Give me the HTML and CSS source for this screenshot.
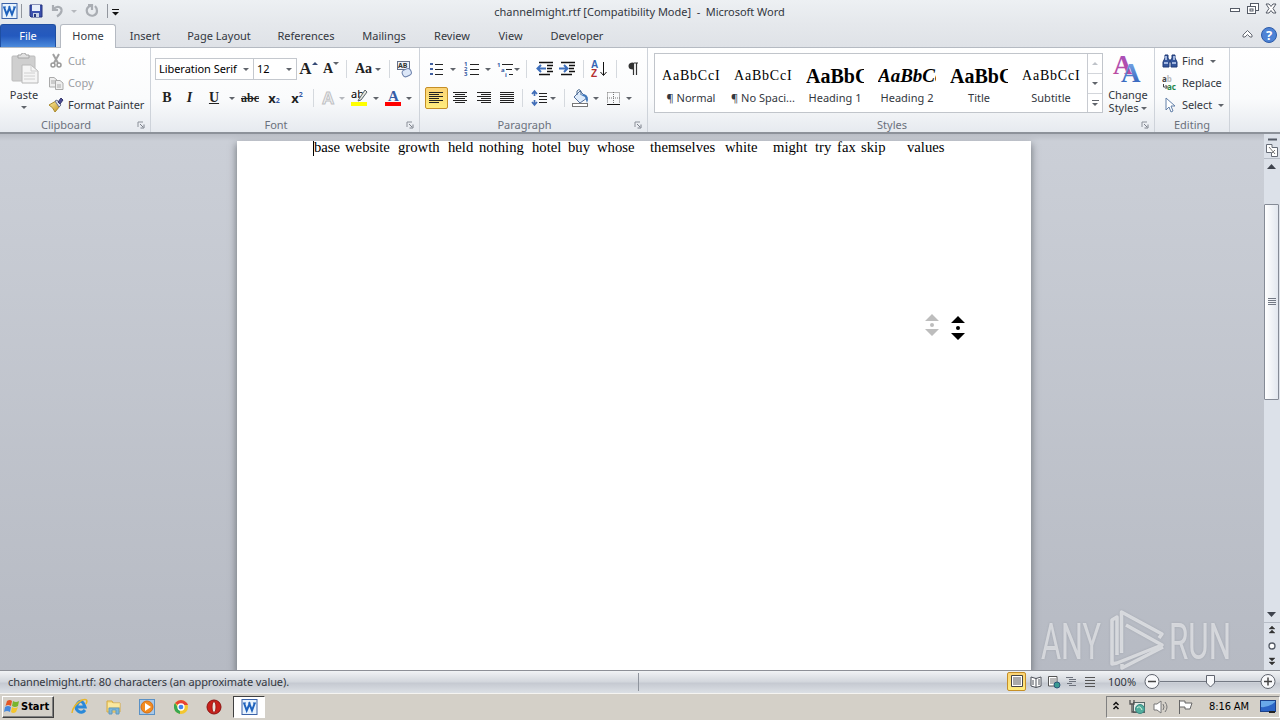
FILE: index.html
```html
<!DOCTYPE html>
<html lang="en">
  <head>
    <meta charset="UTF-8" />
    <meta name="viewport" content="width=device-width, initial-scale=1.0" />
    <title>channelmight.rtf - Microsoft Word</title>
    <link rel="stylesheet" href="styles.css">
  </head>
  <body>
    <svg class="defs" width="0" height="0">
      <defs>
        <linearGradient id="blue" x1="0" y1="0" x2="0" y2="1"><stop offset="0" stop-color="#82b1ed"/><stop offset="1" stop-color="#2858b5"/></linearGradient>
        <linearGradient id="purple" x1="0" y1="0" x2="0" y2="1"><stop offset="0" stop-color="#a451c0"/><stop offset="1" stop-color="#c04a9a"/></linearGradient>
        <linearGradient id="gold" x1="0" y1="0" x2="1" y2="1"><stop offset="0" stop-color="#fff0a0"/><stop offset="1" stop-color="#c09020"/></linearGradient>
        <symbol id="word" viewBox="0 0 18 18">
          <rect x="2" y="1.500" width="15" height="15" fill="#e8f3fd" stroke="#3a62a8"/>
          <path d="M4 5L6.700 12.500L9.500 6L12 12.500L14.800 5" fill="none" stroke="#1e62bd" stroke-width="2"/>
          <path d="M3 5H6M8 5H10.500M13 5H16" stroke="#1e62bd"/>
        </symbol>
        <symbol id="launcher" viewBox="0 0 8 8"><path d="M1 6V1H6" fill="none" stroke="#8b9099"/><path d="M3 3L6 6M7 3.500V7H3.500" fill="none" stroke="#7b808a"/></symbol>
      </defs>
    </svg>

    <header class="title-bar">
      <div class="quick-access">
        <svg width="18" height="18"><use href="#word"/></svg>
        <i class="sep"></i>
        <svg class="save" width="16" height="16" viewBox="0 0 16 16"><path d="M2 2H14V14H3L2 13Z" fill="#3c50ad" stroke="#27357f"/><path d="M4 2H12V8H4Z" fill="#e9effa"/><path d="M5 10H11V14H5Z" fill="#c9d2e6"/><path d="M6 11H8V14H6Z" fill="#28377f"/></svg>
        <svg class="undo" width="14" height="14" viewBox="0 0 14 14"><path d="M2 1V6H7M2.500 5.500C6 1 11 3 10.500 7Q10 10 6 12.500" fill="none" stroke="#a9adb3" stroke-width="2.200"/></svg>
        <i class="arrow pale"></i>
        <svg class="redo" width="14" height="14" viewBox="0 0 14 14"><path d="M3 1H7V6M7 2C3 1 0 6 3 10C6 13 12 12 12 7Q12 4 10 2" fill="none" stroke="#a9adb3" stroke-width="2.200"/></svg>
        <i class="sep"></i>
        <svg class="customize" width="9" height="8" viewBox="0 0 9 8"><path d="M1 1.500H8" stroke="#111"/><path d="M1 4H8L4.500 7.500Z" fill="#111"/></svg>
      </div>
      <div class="title">channelmight.rtf [Compatibility Mode] &nbsp;-&nbsp; Microsoft Word</div>
      <svg class="window-buttons" width="50" height="18" viewBox="0 0 50 18">
        <g fill="#fff" stroke="#555b66"><rect x="1.500" y="8.500" width="9" height="3"/><rect x="21.500" y="3.500" width="8" height="7"/><rect x="18.500" y="6.500" width="8" height="7"/><rect x="21" y="9" width="3" height="2"/><path d="M37 4H40L42 6.500L44 4H47L44 8.500L47 13H44L42 10.500L40 13H37L40 8.500Z"/></g>
      </svg>
    </header>

    <nav class="tabs">
      <div class="tab file">File</div>
      <div class="tab home">Home</div>
      <div class="tab insert">Insert</div>
      <div class="tab layout">Page Layout</div>
      <div class="tab references">References</div>
      <div class="tab mailings">Mailings</div>
      <div class="tab review">Review</div>
      <div class="tab view">View</div>
      <div class="tab developer">Developer</div>
      <svg class="help" width="36" height="18" viewBox="0 0 36 18"><path d="M1 9L5.500 4.500L10 9V11H8L5.500 8.500L3 11H1Z" fill="#fff" stroke="#646973"/><circle cx="27" cy="9" r="7.500" fill="#4e83d5" stroke="#2e5ca9"/><text x="27" y="14" text-anchor="middle" class="question">?</text></svg>
    </nav>

    <main class="ribbon">
      <section class="group clipboard">
        <div class="tools">
          <div class="big paste">
            <svg width="32" height="34" viewBox="0 0 32 34"><rect x="4" y="3" width="23" height="25" rx="1" fill="#cfcfcf" stroke="#bcbcbc"/><path d="M10 5V2H13Q13 0 15.500 0T18 2H21V5Z" fill="#e1e1e1" stroke="#a5a5a5"/><path d="M14 12H23L30 18V30H14Z" fill="#f5f5f5" stroke="#b8b8b8"/><path d="M23 12V18H30M16 20H27M16 23H27M16 26H27" fill="none" stroke="#d0d0d0"/></svg>
            <span>Paste</span><i class="arrow"></i>
          </div>
          <div class="list">
            <div class="disabled"><svg width="16" height="16" viewBox="0 0 16 16"><path d="M5 1L10 10M11 1L6 10" stroke="#a1a1a1" stroke-width="2"/><circle cx="5" cy="12" r="2" fill="none" stroke="#999" stroke-width="1.500"/><circle cx="11" cy="12" r="2" fill="none" stroke="#999" stroke-width="1.500"/></svg><span>Cut</span></div>
            <div class="disabled"><svg width="16" height="16" viewBox="0 0 16 16"><g fill="#eee" stroke="#aaa"><path d="M1.500 2.500H6L9 5V12H1.500Z"/><path d="M7.500 5.500H12L15 8V14.500H7.500Z"/></g><path d="M3 6H7M3 8H7M9 10H13M9 12H13" stroke="#aaa"/></svg><span>Copy</span></div>
            <div><svg width="16" height="16" viewBox="0 0 16 16"><path d="M1 8L8 4L12 9L7 15Q5 10 1 8Z" fill="url(#gold)" stroke="#a98a2c"/><path d="M7 4L9 3L13 8L11 10Z" fill="#dde2ef" stroke="#6c7390"/><path d="M10 5L13 1L15 3L12 7Z" fill="#4d4e95" stroke="#33346b"/></svg><span>Format Painter</span></div>
          </div>
        </div>
        <footer><span>Clipboard</span><svg width="8" height="8"><use href="#launcher"/></svg></footer>
      </section>

      <section class="group font">
        <div class="tools rows">
          <div class="row font-top">
            <div class="combo name">Liberation Serif<i class="arrow"></i></div>
            <div class="combo size">12<i class="arrow"></i></div>
            <div class="letter grow">A<i class="up"></i></div>
            <div class="letter shrink">A<i class="arrow"></i></div>
            <i class="divider"></i>
            <div class="letter case">Aa<i class="arrow"></i></div>
            <i class="divider"></i>
            <svg width="20" height="22" viewBox="0 0 20 22"><rect x="2.500" y="3.500" width="12" height="8" fill="#eef3fa" stroke="#66718a"/><text x="3" y="10" class="tiny">AB</text><rect x="7" y="11" width="9" height="7" rx="3" transform="rotate(-25 12 14)" fill="#dce7f8" stroke="#6b80aa"/></svg>
          </div>
          <div class="row font-bottom">
            <b class="letter">B</b><i class="letter">I</i><u class="letter">U</u><i class="arrow"></i>
            <s class="letter small">abc</s>
            <div class="letter script">x<sub>2</sub></div>
            <div class="letter script">x<sup>2</sup></div>
            <i class="divider"></i>
            <svg width="20" height="22" viewBox="0 0 20 22"><text x="4" y="17" class="effect">A</text></svg>
            <i class="arrow pale"></i>
            <svg width="22" height="22" viewBox="0 0 22 22"><rect x="3" y="15" width="16" height="4" fill="#ffff00"/><text x="3" y="11" class="highlight">ab</text><path d="M11 12L17 3L19 5L13 13L10 14Z" fill="#e7e7df" stroke="#5c666b"/></svg>
            <i class="arrow"></i>
            <svg width="20" height="22" viewBox="0 0 20 22"><text x="5" y="14" class="color-letter">A</text><rect x="2" y="15" width="16" height="4" fill="#f00"/></svg>
            <i class="arrow"></i>
          </div>
        </div>
        <footer><span>Font</span><svg width="8" height="8"><use href="#launcher"/></svg></footer>
      </section>

      <section class="group paragraph">
        <div class="tools rows">
          <div class="row para-top">
            <svg width="24" height="22" viewBox="0 0 24 22"><path d="M5 6H8M5 11H8M5 16H8" stroke="#4060a0" stroke-width="2"/><path d="M10 6.500H18M10 11.500H18M10 16.500H18" stroke="#222"/></svg>
            <i class="arrow"></i>
            <svg width="27" height="22" viewBox="0 0 27 22"><text x="7" y="8" class="num">1</text><text x="7" y="13" class="num">2</text><text x="7" y="18" class="num">3</text><path d="M13 6.500H22M13 11.500H22M13 16.500H22" stroke="#222"/></svg>
            <i class="arrow"></i>
            <svg width="23" height="22" viewBox="0 0 23 22"><text x="6" y="9" class="num">1</text><text x="10" y="14" class="num">a</text><text x="14" y="19" class="num">i</text><path d="M11 6.500H22M15 11.500H21M18 16.500H22" stroke="#222"/></svg>
            <i class="arrow"></i>
            <i class="divider"></i>
            <svg width="22" height="22" viewBox="0 0 22 22"><path d="M5 4.500H19M13 7.500H19M13 10.500H18M13 13.500H19M5 16.500H16" stroke="#111" stroke-width="1.300"/><path d="M12 10.500H4M7 7L3.500 10.500L7 14" fill="none" stroke="#3e70bd" stroke-width="2"/></svg>
            <svg width="22" height="22" viewBox="0 0 22 22"><path d="M5 4.500H19M13 7.500H19M13 10.500H18M13 13.500H19M5 16.500H16" stroke="#111" stroke-width="1.300"/><path d="M3 10.500H11M8 7L11.500 10.500L8 14" fill="none" stroke="#3e70bd" stroke-width="2"/></svg>
            <i class="divider"></i>
            <svg width="24" height="22" viewBox="0 0 24 22"><text x="3" y="10" class="sort blue">A</text><text x="3" y="19" class="sort red">Z</text><path d="M15.500 4V17M12.500 14L15.500 17.500L18.500 14" fill="none" stroke="#111"/></svg>
            <i class="divider"></i>
            <svg width="24" height="22" viewBox="0 0 24 22"><path d="M12.500 5H17M12.500 5V17M15.500 5V17" fill="none" stroke="#333" stroke-width="1.200"/><path d="M12 4.500V11.500Q7.500 11.500 7.500 8T12 4.500" fill="#333"/></svg>
          </div>
          <div class="row para-bottom">
            <div class="selected"><svg width="21" height="20" viewBox="0 0 21 20"><path d="M3 4.500H17M3 6.500H13M3 8.500H17M3 10.500H13M3 12.500H17M3 14.500H13" stroke="#222"/></svg></div>
            <svg width="24" height="22" viewBox="0 0 24 22"><path d="M5 5.500H19M7 7.500H17M5 9.500H19M7 11.500H17M5 13.500H19M7 15.500H17" stroke="#222"/></svg>
            <svg width="24" height="22" viewBox="0 0 24 22"><path d="M5 5.500H19M9 7.500H19M5 9.500H19M9 11.500H19M5 13.500H19M9 15.500H19" stroke="#222"/></svg>
            <svg width="22" height="22" viewBox="0 0 22 22"><path d="M4 5.500H18M4 7.500H18M4 9.500H18M4 11.500H18M4 13.500H18M4 15.500H18" stroke="#222"/></svg>
            <i class="divider"></i>
            <svg width="24" height="22" viewBox="0 0 24 22"><path d="M7.500 4V9M5 7L7.500 4L10 7M7.500 13V18M5 15L7.500 18L10 15" fill="none" stroke="#416eb8" stroke-width="1.700"/><path d="M12 6.500H20M12 9.500H20M12 12.500H20M12 15.500H20" stroke="#222"/></svg>
            <i class="arrow"></i><i class="divider"></i>
            <svg width="26" height="22" viewBox="0 0 26 22"><path d="M6 10L12 4L19 11L12 16Z" fill="#deebfa" stroke="#536f9c"/><path d="M9 8V4Q11 1 13 4V8" fill="none" stroke="#49698f"/><path d="M16 7Q22 9 19 16L17 10L13 8Z" fill="#4178bb"/><rect x="4.500" y="16.500" width="15" height="3" fill="#fff" stroke="#777"/></svg>
            <i class="arrow"></i>
            <svg width="26" height="22" viewBox="0 0 26 22"><path d="M6.500 5.500H18.500V16M6.500 5.500V16M12.500 5V17M6 11H19" fill="none" stroke="#777" stroke-dasharray="1 1"/><path d="M6 17.500H19" stroke="#111"/></svg>
            <i class="arrow"></i>
          </div>
        </div>
        <footer><span>Paragraph</span><svg width="8" height="8"><use href="#launcher"/></svg></footer>
      </section>

      <section class="group styles">
        <div class="tools">
          <div class="gallery">
            <div class="style"><p>AaBbCcI</p><span>¶ Normal</span></div>
            <div class="style"><p>AaBbCcI</p><span>¶ No Spaci...</span></div>
            <div class="style heading"><p>AaBbC</p><span>Heading 1</span></div>
            <div class="style heading italic"><p>AaBbCc</p><span>Heading 2</span></div>
            <div class="style heading"><p>AaBbC</p><span>Title</span></div>
            <div class="style"><p>AaBbCcI</p><span>Subtitle</span></div>
            <div class="gallery-buttons"><div><i class="up pale"></i></div><div><i class="arrow"></i></div><div class="more"><i class="arrow"></i></div></div>
          </div>
          <div class="big change">
            <svg width="34" height="34" viewBox="0 0 34 34"><text x="2" y="20" class="art purple">A</text><text x="10" y="28" class="art blue-a">A</text></svg>
            <span>Change</span><span>Styles <i class="arrow"></i></span>
          </div>
        </div>
        <footer><span>Styles</span><svg width="8" height="8"><use href="#launcher"/></svg></footer>
      </section>

      <section class="group editing">
        <div class="tools list">
          <div><svg width="16" height="16" viewBox="0 0 16 16"><path d="M3 2H6V5L7 7H9L10 5V2H13V5L15 9V14H9V9H7V14H1V9L3 5Z" fill="#34569c" stroke="#203b76"/><path d="M2 10H6M10 10H14M4 3V7M12 3V7" stroke="#c4d5f5" stroke-width="1.500"/></svg><span>Find</span><i class="arrow"></i></div>
          <div><svg width="16" height="16" viewBox="0 0 16 16"><text x="0" y="7" class="replace">a<tspan fill="#bbb">b</tspan></text><text x="5" y="15" class="replace green">ac</text><path d="M1.500 9V12H5M3.500 10L5.500 12L3.500 14" fill="none" stroke="#444"/></svg><span>Replace</span></div>
          <div><svg width="16" height="16" viewBox="0 0 16 16"><path d="M4 1V13L7 10L9 15L11 14L9 9H13Z" fill="#fff" stroke="#6280a9"/></svg><span>Select</span><i class="arrow"></i></div>
        </div>
        <footer><span>Editing</span></footer>
      </section>
    </main>

    <div class="workspace">
      <div class="canvas">
        <article class="page">
          <p class="words"><span class="w1">base</span><span class="w2">website</span><span class="w3">growth</span><span class="w4">held</span><span class="w5">nothing</span><span class="w6">hotel</span><span class="w7">buy</span><span class="w8">whose</span><span class="w9">themselves</span><span class="w10">white</span><span class="w11">might</span><span class="w12">try</span><span class="w13">fax</span><span class="w14">skip</span><span>values</span></p>
        </article>
        <svg class="scroll-cursor" width="44" height="30" viewBox="0 0 44 30"><g fill="#bdbdbd"><path d="M3 8L10 1L17 8ZM3 16L10 23L17 16Z"/><circle cx="10" cy="12" r="2"/></g><g fill="#000"><path d="M29 10L36 3L43 10ZM29 20L36 27L43 20Z"/><circle cx="36" cy="15" r="2"/></g></svg>
        <svg class="watermark" width="200" height="64" viewBox="0 0 200 64">
          <g fill="#fff" fill-opacity=".52"><text x="3" y="52" textLength="60" lengthAdjust="spacingAndGlyphs">ANY</text><text x="131" y="52" textLength="62" lengthAdjust="spacingAndGlyphs">RUN</text></g>
          <path d="M79 48V10L74 13V57L79 56L124 38L88 18M83.500 46V5L124 27L121 31M125 40L84 61V57" fill="none" stroke="#fff" stroke-opacity=".55" stroke-width="3.500" stroke-linejoin="round"/>
        </svg>
      </div>
      <aside class="scrollbar">
        <svg width="16" height="42" viewBox="0 0 16 42"><path d="M4 5.500H13" stroke="#555b66" stroke-width="2"/><path d="M2.500 10.500H8V13.500H13.500V22.500H7.500V18.500H2.500Z" fill="#fff" stroke="#666c77"/><path d="M5 13L11 20M8 19L11 16" stroke="#777"/><path d="M0 24.500H16" stroke="#b7bdc7"/><path d="M3 35L7.500 30L12 35Z" fill="#3e434d"/></svg>
        <div class="thumb"><svg width="8" height="8" viewBox="0 0 8 8"><path d="M0 .5H8M0 2.500H8M0 4.500H8M0 6.500H8" stroke="#737985"/></svg></div>
        <svg class="bottom" width="16" height="66" viewBox="0 0 16 66"><path d="M3 8H12L7.500 13Z" fill="#3e434d"/><path d="M0 18.500H16" stroke="#b7bdc7"/><path d="M5 25L8 22L11 25ZM5 29L8 26L11 29ZM5 54H11L8 57ZM5 58H11L8 61Z" fill="#333" stroke="#333" stroke-width=".4"/><circle cx="8" cy="42" r="3" fill="#fff" stroke="#555b66" stroke-width="1.300"/></svg>
      </aside>
    </div>

    <div class="status-bar">
      <span class="count">channelmight.rtf: 80 characters (an approximate value).</span>
      <i class="status-divider"></i>
      <div class="view-buttons">
        <div class="selected"><svg width="16" height="16" viewBox="0 0 16 16"><path d="M2.500 2.500H13.500V13.500H2.500Z" fill="#fff" stroke="#444"/><path d="M4 5H12M4 7H12M4 9H12M4 11H12" stroke="#555"/></svg></div>
        <svg width="16" height="16" viewBox="0 0 16 16"><path d="M3 3L8 4.500L13 3V12L8 13.500L3 12ZM8 4V13M5 6V11M10 6H12M10 8H12M10 10H12" fill="#fff" stroke="#4f535b"/></svg>
        <svg width="16" height="16" viewBox="0 0 16 16"><path d="M2.500 2.500H11V12H2.500Z" fill="#fff" stroke="#555"/><path d="M4 5H10M4 7H10M4 9H9" stroke="#777"/><circle cx="11" cy="11" r="3" fill="#3a9a91" stroke="#2b577a"/></svg>
        <svg width="16" height="16" viewBox="0 0 16 16"><path d="M2 3.500H9M5 5.500H12M5 7.500H12M3 9.500H8M5 11.500H12" stroke="#6d727c"/></svg>
        <svg width="16" height="16" viewBox="0 0 16 16"><path d="M3 3.500H13M3 6.500H13M3 9.500H13M3 12.500H13" stroke="#555"/></svg>
      </div>
      <span class="percent">100%</span>
      <svg class="zoom" width="136" height="20" viewBox="0 0 136 20"><path d="M18 9.500H126" stroke="#747983"/><g fill="#f8f9fb" stroke="#60656f"><circle cx="10" cy="9.500" r="7"/><circle cx="126" cy="9.500" r="7"/><path d="M64.500 3.500H72.500V11L68.500 15L64.500 11Z"/></g><path d="M6 9.500H14M122 9.500H130M126 5.500V13.500" stroke="#444" stroke-width="1.500"/></svg>
    </div>

    <footer class="taskbar">
      <div class="start"><svg width="16" height="18" viewBox="0 0 16 18"><path d="M3 3Q6 1 8 3L7 8Q4 6 1.500 8Z" fill="#e35726"/><path d="M9 3Q12 5 15 3L14 8Q11 10 8 8Z" fill="#79b52e"/><path d="M1 9Q4 7 7 9L6 14Q3 12 0 14Z" fill="#4789dd"/><path d="M8 9Q11 11 14 9L12 14Q9 16 7 14Z" fill="#f4c52c"/></svg><b>Start</b></div>
      <svg class="app" width="18" height="18" viewBox="0 0 18 18"><path d="M14 12Q11 16 7 13T7 5T14 9H5" fill="none" stroke="#2a89d9" stroke-width="3"/><path d="M1 15Q2 7 11 2Q18 0 15 6" fill="none" stroke="#e8b62b" stroke-width="1.500"/></svg>
      <svg class="app" width="18" height="18" viewBox="0 0 18 18"><path d="M2 3H7L8 5H15V14H2Z" fill="#f5dc82" stroke="#d5aa43"/><path d="M3 6H15M3 8H15" stroke="#fff4bc"/><path d="M4 16V10H14V16H11V12H7V16Z" fill="#7ab6dc" stroke="#6199bd"/></svg>
      <svg class="app" width="18" height="18" viewBox="0 0 18 18"><rect x="1.500" y="1.500" width="15" height="15" fill="#a8c8e8" stroke="#5a91c5"/><circle cx="9" cy="9" r="6" fill="#f28b20" stroke="#d66d10"/><path d="M7 5L13 9L7 13Z" fill="#fff"/></svg>
      <svg class="app" width="18" height="18" viewBox="0 0 18 18"><circle cx="9" cy="9" r="7" fill="#f3c72f"/><path d="M9 9L3 5Q9-1 15 5L16 7H9Z" fill="#e74334"/><path d="M3 5L8 13V16Q1 14 2 7Z" fill="#38a852"/><circle cx="9" cy="9" r="3" fill="#4284ed" stroke="#fff" stroke-width="1.300"/></svg>
      <svg class="app" width="18" height="18" viewBox="0 0 18 18"><circle cx="9" cy="9" r="7" fill="#c9201b" stroke="#8c1210"/><ellipse cx="9" cy="9" rx="2" ry="5.500" fill="#e9e4df" stroke="#9e1713"/></svg>
      <div class="running"><svg width="18" height="18"><use href="#word"/></svg></div>
      <div class="tray">
        <svg width="8" height="12" viewBox="0 0 8 12"><path d="M1.500 4L4 1.500L6.500 4M1.500 8L4 5.500L6.500 8" fill="none" stroke="#111" stroke-width="1.500"/></svg>
        <svg class="network" width="18" height="18" viewBox="0 0 18 18"><rect x="4.500" y="4.500" width="11" height="10" fill="#e6ece7" stroke="#566"/><path d="M1 2V6H5V2M3 6V14H7" fill="none" stroke="#555" stroke-width="1.300"/><circle cx="11" cy="11" r="4.500" fill="#53ae9d" stroke="#3a8b85"/><path d="M8 10Q11 7 13 12" fill="none" stroke="#d9f2db"/></svg>
        <svg class="sound" width="18" height="18" viewBox="0 0 18 18"><path d="M1 6H4L8 3V15L4 12H1Z" fill="#fff" stroke="#777"/><path d="M10 6Q12 9 10 12M12 4Q16 9 12 14" fill="none" stroke="#777"/></svg>
        <svg class="flag" width="18" height="18" viewBox="0 0 18 18"><path d="M2.500 2V16M3 3H8V5H15L13 11H8V9H3" fill="#fff" stroke="#666"/></svg>
        <span class="clock">8:16 AM</span>
        <svg width="16" height="14" viewBox="0 0 16 14"><rect x=".5" y=".5" width="15" height="11" fill="#2c65c6" stroke="#1c418a"/><path d="M1 7Q8 8 15 2V1H1Z" fill="#69a9e9"/><path d="M9 12H15" stroke="#222" stroke-width="2"/></svg>
      </div>
    </footer>
  </body>
</html>
```
FILE: styles.css
```css
* {
  box-sizing: border-box;
}

body {
  margin: 0;
  width: 1280px;
  height: 720px;
  overflow: hidden;
  display: flex;
  flex-direction: column;
  font-family: "Noto Sans", "Open Sans", sans-serif;
  font-size: 11px;
  line-height: 14px;
  color: #333740;
  background-color: #e4e8ec;
}

p {
  margin: 0;
}

svg {
  display: block;
  flex: none;
}

.defs {
  width: 0;
  height: 0;
  position: absolute;
}

.arrow,
.up {
  display: inline-block;
  flex: none;
  width: 0;
  height: 0;
  border: 3px solid transparent;
  border-top-color: #60646b;
  border-bottom: 0;
}

.up {
  border-top: 0;
  border-bottom: 3px solid #344975;
}

.arrow.pale {
  border-top-color: #b5b8bd;
}

.up.pale {
  border-bottom-color: #bfc3c9;
}

/* title bar and tabs */
.title-bar {
  height: 24px;
  display: grid;
  grid-template-columns: 240px 799px 1fr;
  background: linear-gradient(#edf0f3, #e5e8ec);
}

.quick-access {
  display: flex;
  align-items: center;
  height: 22px;
}

.quick-access .sep {
  width: 1px;
  height: 14px;
  margin: 0 4px 0 3px;
  background: #92969e;
}

.quick-access .save {
  margin-left: 2px;
}

.undo {
  margin: 0 6px 0 7px;
}

.redo {
  margin: 0 5px 0 8px;
}

.quick-access .customize {
  margin: 2px 0 0 -1px;
}

.title {
  text-align: center;
  padding-top: 5px;
  letter-spacing: -0.03px;
}

.window-buttons {
  justify-self: end;
  margin-right: 1px;
}

.tabs {
  height: 24px;
  display: flex;
  border-bottom: 1px solid #b5bac2;
  background: linear-gradient(#e5e8ec, #dfe2e7);
}

.tab {
  text-align: center;
  padding-top: 5px;
}

.tab.file {
  width: 56px;
  color: #fff;
  border: 1px solid #1f4fa2;
  border-bottom: 0;
  border-radius: 3px 3px 0 0;
  padding-top: 4px;
  background: linear-gradient(#2a5bb9, #2459be 50%, #4c8bdc);
}

.tab.home {
  width: 56px;
  height: 24px;
  margin-left: 4px;
  padding-top: 4px;
  background: #fff;
  border: 1px solid #b5bac2;
  border-bottom: 0;
  border-radius: 3px 3px 0 0;
}

.insert { width: 58px; }
.layout { width: 90px; }
.references { width: 84px; }
.mailings { width: 72px; }
.review { width: 64px; }
.view { width: 53px; }
.developer { width: 80px; }

.help {
  margin: 2px 2px 0 auto;
}

.question {
  font: bold 13px "Noto Sans", sans-serif;
  fill: #fff;
}

/* ribbon */
.ribbon {
  height: 86px;
  display: flex;
  border-bottom: 2px solid #8d929a;
  background: linear-gradient(#fff, #fafbfc 60%, #e6eaef);
}

.group {
  display: flex;
  flex-direction: column;
  border-right: 1px solid #ced3da;
}

.clipboard { width: 151px; }
.font { width: 269px; }
.paragraph { width: 228px; }
.styles { width: 507px; }
.editing { width: 75px; }

.tools {
  display: flex;
  height: 70px;
}

.group footer {
  display: grid;
  grid-template-columns: 1fr 18px;
  align-items: center;
  justify-items: center;
  height: 14px;
  color: #6b717c;
}

.editing footer {
  grid-template-columns: 1fr;
}

.big {
  display: flex;
  flex-direction: column;
  align-items: center;
}

.paste {
  width: 48px;
  padding-top: 5px;
}

.paste span {
  margin: 1px 0 4px;
}

.list {
  display: flex;
  flex-direction: column;
  padding-top: 2px;
}

.list > div {
  display: flex;
  align-items: center;
  height: 22px;
  letter-spacing: -0.08px;
}

.list span {
  margin-left: 4px;
}

.list .arrow {
  margin-left: 6px;
}

.disabled {
  color: #9b9ea3;
}

.rows {
  flex-direction: column;
  gap: 7px;
  padding-top: 10px;
}

.row {
  height: 22px;
  display: grid;
  align-items: center;
  justify-items: center;
}

.font-top {
  margin-left: 4px;
  grid-template-columns: 99px 43px 23px 22px 9px 34px 9px 22px;
}

.combo {
  width: 100%;
  height: 22px;
  display: flex;
  align-items: center;
  justify-content: space-between;
  padding: 0 4px 0 3px;
  color: #000;
  background: #fff;
  border: 1px solid #c4c8ce;
  letter-spacing: -0.05px;
}

.combo.size {
  border-left: 0;
}

.letter {
  font-family: "Liberation Serif", serif;
  font-size: 14px;
  font-weight: bold;
  color: #222;
}

.grow {
  display: flex;
  font-size: 17px;
}

.shrink {
  display: flex;
  font-size: 14px;
}

.case {
  display: flex;
  align-items: center;
  gap: 3px;
}

.divider {
  width: 1px;
  height: 18px;
  background: #d5d9de;
}

.font-bottom {
  margin-left: 5px;
  grid-template-columns: 22px 23px 26px 10px 26px 22px 24px 9px 20px 7px 28px 5px 29px 3px;
}

.small {
  font-size: 12px;
}

.script {
  display: flex;
  font: bold 13px/14px "Noto Sans", sans-serif;
}

.script sub,
.script sup {
  font-size: 7px;
  line-height: 8px;
  color: #3458a5;
}

.script sub {
  align-self: flex-end;
}

.tiny {
  font: bold 7px "Noto Sans", sans-serif;
  fill: #333;
}

.effect {
  font: bold 17px "Liberation Sans", sans-serif;
  fill: #f4f4f4;
  stroke: #bfc1c4;
}

.highlight {
  font: 11px "Noto Sans", sans-serif;
}

.color-letter {
  font: bold 15px "Liberation Serif", serif;
  fill: #355da7;
}

.para-top {
  margin-left: 5px;
  grid-template-columns: 24px 7px 28px 7px 23px 5px 15px 22px 22px 11px 21px 13px 20px;
}

.para-bottom {
  margin-left: 5px;
  grid-template-columns: 23px 24px 24px 22px 9px 24px 3px 20px 14px 15px 22px 7px;
}

.selected {
  width: 100%;
  border: 1px solid #c58f27;
  border-radius: 2px;
  background: linear-gradient(#fbd375, #ffed7d);
}

.num {
  font: bold 6px "Noto Sans", sans-serif;
  fill: #3459a2;
}

.sort {
  font: bold 10px "Liberation Sans", sans-serif;
}

.sort.blue { fill: #3565b5; }
.sort.red { fill: #b52f2f; }

.gallery {
  display: flex;
  width: 449px;
  height: 60px;
  margin: 5px 0 0 6px;
  border: 1px solid #c1c5cb;
  background: #fff;
}

.style {
  width: 72px;
  padding-top: 12px;
  text-align: center;
}

.style p {
  width: 60px;
  height: 20px;
  margin: 0 0 5px 7px;
  overflow: hidden;
  text-align: left;
  white-space: nowrap;
  font: 14px/20px "Liberation Serif", serif;
  letter-spacing: 0.8px;
  color: #000;
}

.style.heading p {
  width: 58px;
  font-size: 20px;
  font-weight: bold;
  letter-spacing: 0;
}

.style.italic p {
  font-size: 19px;
  font-style: italic;
}

.style span {
  display: block;
}

.gallery-buttons {
  width: 15px;
  border-left: 1px solid #c8cbd1;
}

.gallery-buttons div {
  height: 20px;
  display: flex;
  align-items: center;
  justify-content: center;
  border-bottom: 1px solid #d3d6db;
}

.gallery-buttons .more {
  height: 18px;
  flex-direction: column;
  gap: 2px;
  border-bottom: 0;
}

.more::before {
  content: "";
  width: 7px;
  height: 1px;
  background: #60646b;
}

.change {
  width: 50px;
  padding-top: 6px;
  line-height: 13px;
}

.change .arrow {
  margin-bottom: 2px;
}

.art {
  font: bold 27px "Liberation Serif", serif;
}

.art.purple { fill: url(#purple); }
.art.blue-a { fill: url(#blue); }

.editing .list,
.editing .tools {
  padding-left: 7px;
}

.replace {
  font: bold 8px "Noto Sans", sans-serif;
  fill: #444;
}

.replace.green {
  fill: #23864a;
}

/* document */
.workspace {
  height: 536px;
  display: flex;
}

.canvas {
  width: 1264px;
  position: relative;
  padding: 7px 0 0 237px;
  overflow: hidden;
  background: linear-gradient(#b9bdc5, #cbcfd7 7px, #b6bac3);
}

.page {
  width: 794px;
  height: 529px;
  background: #fff;
  box-shadow: 0 4px 7px 1px rgba(70, 75, 80, 0.6);
  padding-left: 76px;
  overflow: hidden;
}

.words {
  display: flex;
  height: 15px;
  border-left: 1px solid #000;
  font: 14.7px/13px "Liberation Serif", serif;
  color: #000;
  white-space: nowrap;
}

.words span { flex: none; }
.w1 { width: 31px; }
.w2 { width: 53px; }
.w3 { width: 50px; }
.w4 { width: 31px; }
.w5 { width: 53px; }
.w6 { width: 36px; }
.w7 { width: 29px; }
.w8 { width: 53px; }
.w9 { width: 75px; }
.w10 { width: 48px; }
.w11 { width: 42px; }
.w12 { width: 22px; }
.w13 { width: 24px; }
.w14 { width: 46px; }

.scroll-cursor {
  position: absolute;
  left: 922px;
  top: 179px;
}

.watermark {
  position: absolute;
  left: 1038px;
  top: 473px;
  font: 50px Roboto, sans-serif;
  filter: drop-shadow(0 0 1px rgba(80, 85, 95, 0.35));
}

.scrollbar {
  width: 16px;
  display: flex;
  flex-direction: column;
  background: #dce1e9;
}

.thumb {
  height: 196px;
  width: 15px;
  margin-top: 28px;
  display: flex;
  align-items: center;
  justify-content: center;
  border: 1px solid #858b96;
  border-radius: 1px;
  background: linear-gradient(90deg, #fff, #e2e7ef);
}

.bottom {
  margin-top: auto;
}

/* status bar */
.status-bar {
  height: 23px;
  display: flex;
  align-items: center;
  padding-bottom: 1px;
  border-top: 1px solid #8d9097;
  background: linear-gradient(#f1f3f5, #d2d6dc 50%, #c5c9d1 55%, #dce0e5);
}

.count {
  width: 638px;
  padding-left: 8px;
  letter-spacing: -0.1px;
}

.status-divider {
  width: 1px;
  height: 18px;
  background: #8f949d;
}

.view-buttons {
  display: flex;
  align-items: center;
  gap: 2px;
  margin-left: 368px;
}

.view-buttons .selected {
  width: 19px;
  height: 19px;
  padding: 0 0 0 1px;
}

.percent {
  width: 34px;
  margin-left: 10px;
}

/* taskbar */
.taskbar {
  height: 27px;
  display: flex;
  align-items: center;
  padding: 0 0 0 2px;
  background: #d4d0c8;
  border-top: 1px solid #f5f4f1;
  color: #000;
  font-family: "DejaVu Sans Condensed", sans-serif;
}

.start {
  width: 52px;
  height: 22px;
  margin-right: 17px;
  display: flex;
  align-items: center;
  gap: 1px;
  border: 1px solid;
  border-color: #fff #404040 #404040 #fff;
  box-shadow: inset -1px -1px #808080;
  padding-left: 1px;
}

.app {
  margin-right: 15.5px;
}

.running {
  width: 32px;
  height: 22px;
  margin-left: -6px;
  display: flex;
  align-items: center;
  justify-content: center;
  border: 1px solid;
  border-color: #404040 #fff #fff #404040;
  background: #fff;
}

.tray {
  width: 174px;
  height: 22px;
  margin: 0 0 0 auto;
  display: flex;
  align-items: center;
  padding-left: 5px;
  border: 1px solid;
  border-color: #808080 #fff #fff #808080;
}

.network { margin-left: 9px; }
.sound { margin-left: 6px; }
.flag { margin-left: 6px; }

.clock {
  width: 51px;
  margin-left: 14px;
  letter-spacing: -0.1px;
}
```
